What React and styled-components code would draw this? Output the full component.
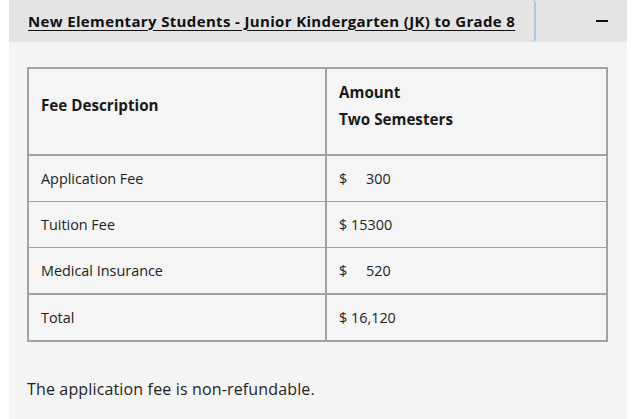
import React from 'react';
import styled, { createGlobalStyle } from 'styled-components';

const GlobalStyle = createGlobalStyle`
  html, body {
    margin: 0;
    padding: 0;
    background: #ffffff;
  }
  body {
    font-family: "Open Sans", "Liberation Sans", sans-serif;
    color: #1f1f1f;
  }
`;

const Accordion = styled.section`
  margin: 0 5px 0 9px;
  background: #f4f4f4;
`;

const Header = styled.div`
  display: flex;
  align-items: stretch;
  height: 42px;
  background: #e4e4e4;
`;

const TitleButton = styled.button`
  flex: 0 0 527px;
  display: flex;
  align-items: center;
  padding: 0 0 1px 19px;
  border: none;
  border-right: 2px solid #a9c9ea;
  border-radius: 0 4px 4px 0;
  background: transparent;
  font-family: inherit;
  font-size: 15px;
  font-weight: 700;
  letter-spacing: 0.35px;
  color: #111111;
  text-decoration: underline;
  text-underline-offset: 3px;
  text-decoration-thickness: 1px;
  cursor: pointer;
  text-align: left;
  white-space: nowrap;
`;

const Toggle = styled.button`
  flex: 1;
  display: flex;
  align-items: center;
  justify-content: flex-end;
  padding: 0 19px 0 0;
  border: none;
  background: transparent;
  cursor: pointer;
`;

const Minus = styled.span`
  display: block;
  width: 12px;
  height: 2px;
  background: #111111;
`;

const Body = styled.div`
  padding: 25px 19px 27px 18px;
`;

const FeeTable = styled.table`
  width: 100%;
  table-layout: fixed;
  border-collapse: collapse;
  border: 2px solid #a2a2a2;
  background: #f5f5f5;
`;

const HeadCell = styled.th`
  height: 73px;
  padding: 0 12px 12px;
  text-align: left;
  vertical-align: middle;
  font-size: 15.2px;
  font-weight: 700;
  line-height: 27px;
  color: #1a1a1a;
  border-bottom: 2px solid #a2a2a2;
  border-left: ${(p) => (p.$divider ? '2px solid #a2a2a2' : 'none')};
`;

const Row = styled.tr`
  border-top: ${(p) => (p.$total ? '2px' : '1px')} solid #a2a2a2;
`;

const Cell = styled.td`
  height: 45px;
  padding: 0 12px;
  font-size: 14.4px;
  color: #222222;
  vertical-align: middle;
  border-left: ${(p) => (p.$divider ? '2px solid #a2a2a2' : 'none')};
  white-space: pre;
`;

const Note = styled.p`
  margin: 36px 0 0;
  font-size: 16px;
  letter-spacing: 0.15px;
  color: #1f1f1f;
`;

const rows = [
  { label: 'Application Fee', amount: '$     300' },
  { label: 'Tuition Fee', amount: '$ 15300' },
  { label: 'Medical Insurance', amount: '$     520' },
  { label: 'Total', amount: '$ 16,120', total: true },
];

export default function App() {
  return (
    <>
      <GlobalStyle />
      <Accordion>
        <Header>
          <TitleButton>New Elementary Students - Junior Kindergarten (JK) to Grade 8</TitleButton>
          <Toggle aria-label="Collapse">
            <Minus />
          </Toggle>
        </Header>
        <Body>
          <FeeTable>
            <colgroup>
              <col style={{ width: '298px' }} />
              <col />
            </colgroup>
            <thead>
              <tr>
                <HeadCell>Fee Description</HeadCell>
                <HeadCell $divider>
                  Amount
                  <br />
                  Two Semesters
                </HeadCell>
              </tr>
            </thead>
            <tbody>
              {rows.map((r) => (
                <Row key={r.label} $total={r.total}>
                  <Cell>{r.label}</Cell>
                  <Cell $divider>{r.amount}</Cell>
                </Row>
              ))}
            </tbody>
          </FeeTable>
          <Note>The application fee is non-refundable.</Note>
        </Body>
      </Accordion>
    </>
  );
}
